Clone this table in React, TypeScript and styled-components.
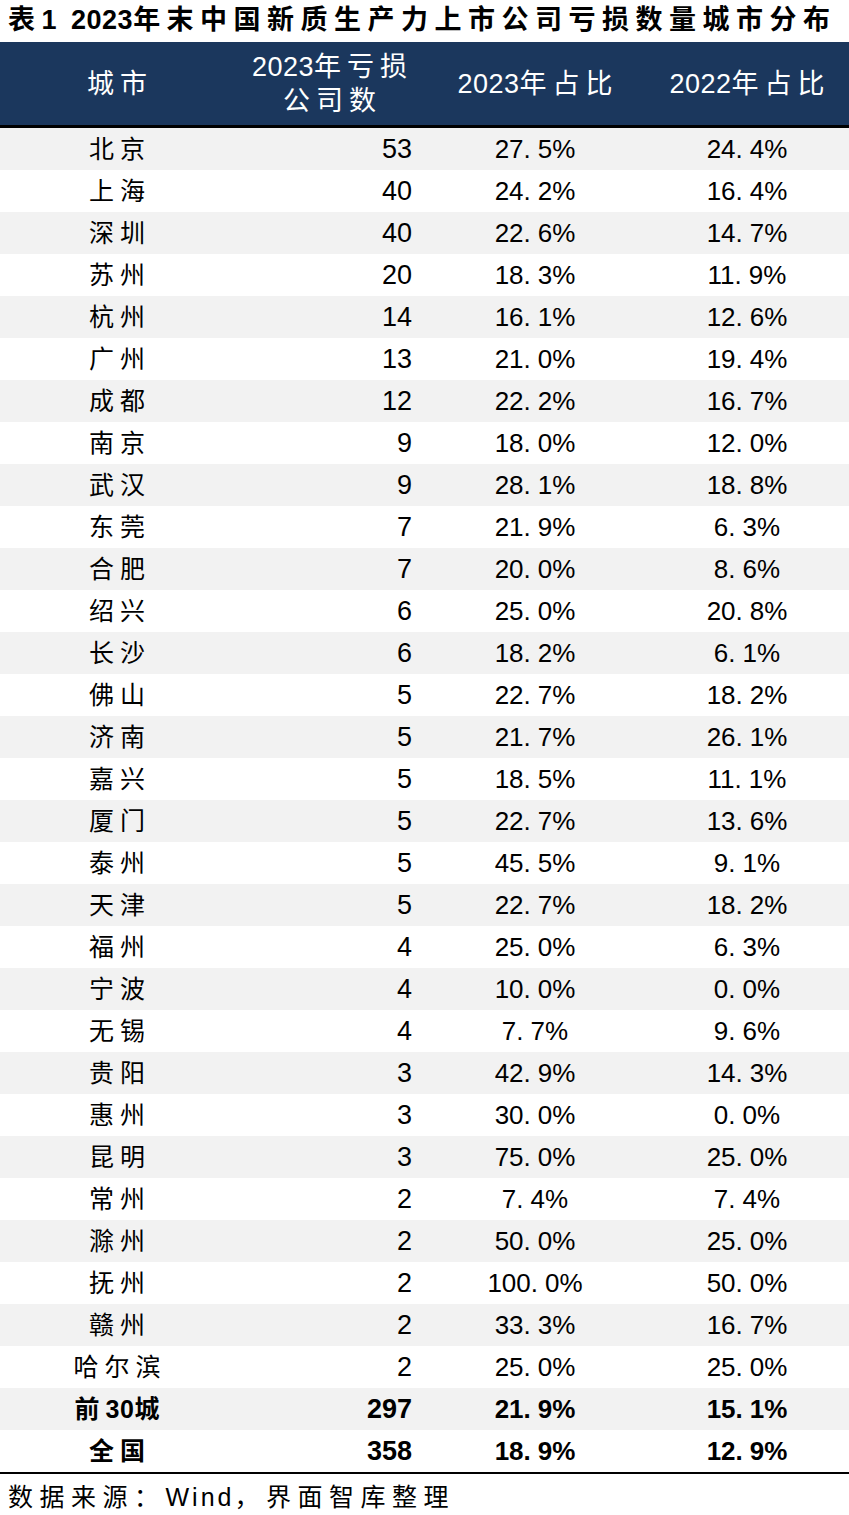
import React from "react";
import styled, { createGlobalStyle } from "styled-components";

interface IRow {
	city: string;
	count: number;
	y2023: string;
	y2022: string;
	bold?: boolean;
}

const rows: Array<IRow> = [
	{ city: "北京", count: 53, y2023: "27.5%", y2022: "24.4%" },
	{ city: "上海", count: 40, y2023: "24.2%", y2022: "16.4%" },
	{ city: "深圳", count: 40, y2023: "22.6%", y2022: "14.7%" },
	{ city: "苏州", count: 20, y2023: "18.3%", y2022: "11.9%" },
	{ city: "杭州", count: 14, y2023: "16.1%", y2022: "12.6%" },
	{ city: "广州", count: 13, y2023: "21.0%", y2022: "19.4%" },
	{ city: "成都", count: 12, y2023: "22.2%", y2022: "16.7%" },
	{ city: "南京", count: 9, y2023: "18.0%", y2022: "12.0%" },
	{ city: "武汉", count: 9, y2023: "28.1%", y2022: "18.8%" },
	{ city: "东莞", count: 7, y2023: "21.9%", y2022: "6.3%" },
	{ city: "合肥", count: 7, y2023: "20.0%", y2022: "8.6%" },
	{ city: "绍兴", count: 6, y2023: "25.0%", y2022: "20.8%" },
	{ city: "长沙", count: 6, y2023: "18.2%", y2022: "6.1%" },
	{ city: "佛山", count: 5, y2023: "22.7%", y2022: "18.2%" },
	{ city: "济南", count: 5, y2023: "21.7%", y2022: "26.1%" },
	{ city: "嘉兴", count: 5, y2023: "18.5%", y2022: "11.1%" },
	{ city: "厦门", count: 5, y2023: "22.7%", y2022: "13.6%" },
	{ city: "泰州", count: 5, y2023: "45.5%", y2022: "9.1%" },
	{ city: "天津", count: 5, y2023: "22.7%", y2022: "18.2%" },
	{ city: "福州", count: 4, y2023: "25.0%", y2022: "6.3%" },
	{ city: "宁波", count: 4, y2023: "10.0%", y2022: "0.0%" },
	{ city: "无锡", count: 4, y2023: "7.7%", y2022: "9.6%" },
	{ city: "贵阳", count: 3, y2023: "42.9%", y2022: "14.3%" },
	{ city: "惠州", count: 3, y2023: "30.0%", y2022: "0.0%" },
	{ city: "昆明", count: 3, y2023: "75.0%", y2022: "25.0%" },
	{ city: "常州", count: 2, y2023: "7.4%", y2022: "7.4%" },
	{ city: "滁州", count: 2, y2023: "50.0%", y2022: "25.0%" },
	{ city: "抚州", count: 2, y2023: "100.0%", y2022: "50.0%" },
	{ city: "赣州", count: 2, y2023: "33.3%", y2022: "16.7%" },
	{ city: "哈尔滨", count: 2, y2023: "25.0%", y2022: "25.0%" },
	{ city: "前30城", count: 297, y2023: "21.9%", y2022: "15.1%", bold: true },
	{ city: "全国", count: 358, y2023: "18.9%", y2022: "12.9%", bold: true },
];

// latin runs stay tight, only the CJK characters get the wide tracking
function Spaced({ text }: { text: string }) {
	const parts = text.split(/([A-Za-z0-9]+)/).filter(Boolean);
	return (
		<>
			{parts.map((p, i) =>
				/^[A-Za-z0-9]+$/.test(p) ? <Latin key={i}>{p}</Latin> : <React.Fragment key={i}>{p}</React.Fragment>
			)}
		</>
	);
}

function Pct({ value }: { value: string }) {
	const [whole, rest] = value.split(".");
	return (
		<>
			{whole}
			<Dot>.</Dot>
			{rest}
		</>
	);
}

function App() {
	return (
		<Page>
			<GlobalStyle />
			<Title>
				表<Latin>1</Latin> <Spaced text="2023年末中国新质生产力上市公司亏损数量城市分布" />
			</Title>
			<Table>
				<colgroup>
					<col style={{ width: 234 }} />
					<col style={{ width: 191 }} />
					<col style={{ width: 220 }} />
					<col style={{ width: 204 }} />
				</colgroup>
				<thead>
					<tr>
						<Th>城市</Th>
						<Th>
							<Spaced text="2023年亏损" />
							<br />
							公司数
						</Th>
						<Th>
							<Spaced text="2023年占比" />
						</Th>
						<Th>
							<Spaced text="2022年占比" />
						</Th>
					</tr>
				</thead>
				<tbody>
					{rows.map((r, i) => (
						<Row key={r.city} $shaded={i % 2 === 0} $bold={!!r.bold}>
							<CityCell>
								<Spaced text={r.city} />
							</CityCell>
							<CountCell>{r.count}</CountCell>
							<PctCell>
								<Pct value={r.y2023} />
							</PctCell>
							<PctCell>
								<Pct value={r.y2022} />
							</PctCell>
						</Row>
					))}
				</tbody>
			</Table>
			<Source>
				数据来源：<SourceLatin>Wind</SourceLatin>，界面智库整理
			</Source>
		</Page>
	);
}

const GlobalStyle = createGlobalStyle`
	html, body {
		margin: 0;
		padding: 0;
		background: #fff;
	}
`;

const Page = styled.div`
	width: 849px;
	font-family: "Liberation Sans", "Noto Sans CJK SC", sans-serif;
	color: #000;
`;

const Latin = styled.span`
	letter-spacing: 0.5px;
`;

const SourceLatin = styled.span`
	letter-spacing: 3px;
`;

const Title = styled.div`
	height: 42px;
	padding-left: 8px;
	font-size: 27px;
	font-weight: 700;
	letter-spacing: 6.5px;
	line-height: 40px;
	white-space: nowrap;
`;

const Table = styled.table`
	width: 849px;
	border-collapse: collapse;
	table-layout: fixed;
	border-bottom: 2.5px solid #000;
`;

const Th = styled.th`
	height: 83px;
	padding: 0 0 0 6px;
	background: #1b375d;
	color: #fff;
	font-size: 27px;
	font-weight: 400;
	letter-spacing: 6px;
	line-height: 34px;
	text-align: center;
	border-bottom: 3px solid #000;
`;

const Row = styled.tr<{ $shaded: boolean; $bold: boolean }>`
	height: 42px;
	background: ${(p) => (p.$shaded ? "#f2f2f2" : "#fff")};
	font-weight: ${(p) => (p.$bold ? 700 : 400)};
`;

const Cell = styled.td`
	padding: 0;
	height: 42px;
	font-size: 26px;
	line-height: 42px;
	white-space: nowrap;
`;

const CityCell = styled(Cell)`
	text-align: center;
	font-size: 25px;
	letter-spacing: 6px;
	padding-left: 6px;
`;

const CountCell = styled(Cell)`
	text-align: right;
	padding-right: 13px;
	font-size: 27px;
`;

const PctCell = styled(Cell)`
	text-align: center;
`;

const Dot = styled.span`
	margin-right: 7px;
`;

const Source = styled.div`
	padding: 6px 0 0 8px;
	font-size: 25px;
	letter-spacing: 6.5px;
	line-height: 34px;
	white-space: nowrap;
`;

export default App;
